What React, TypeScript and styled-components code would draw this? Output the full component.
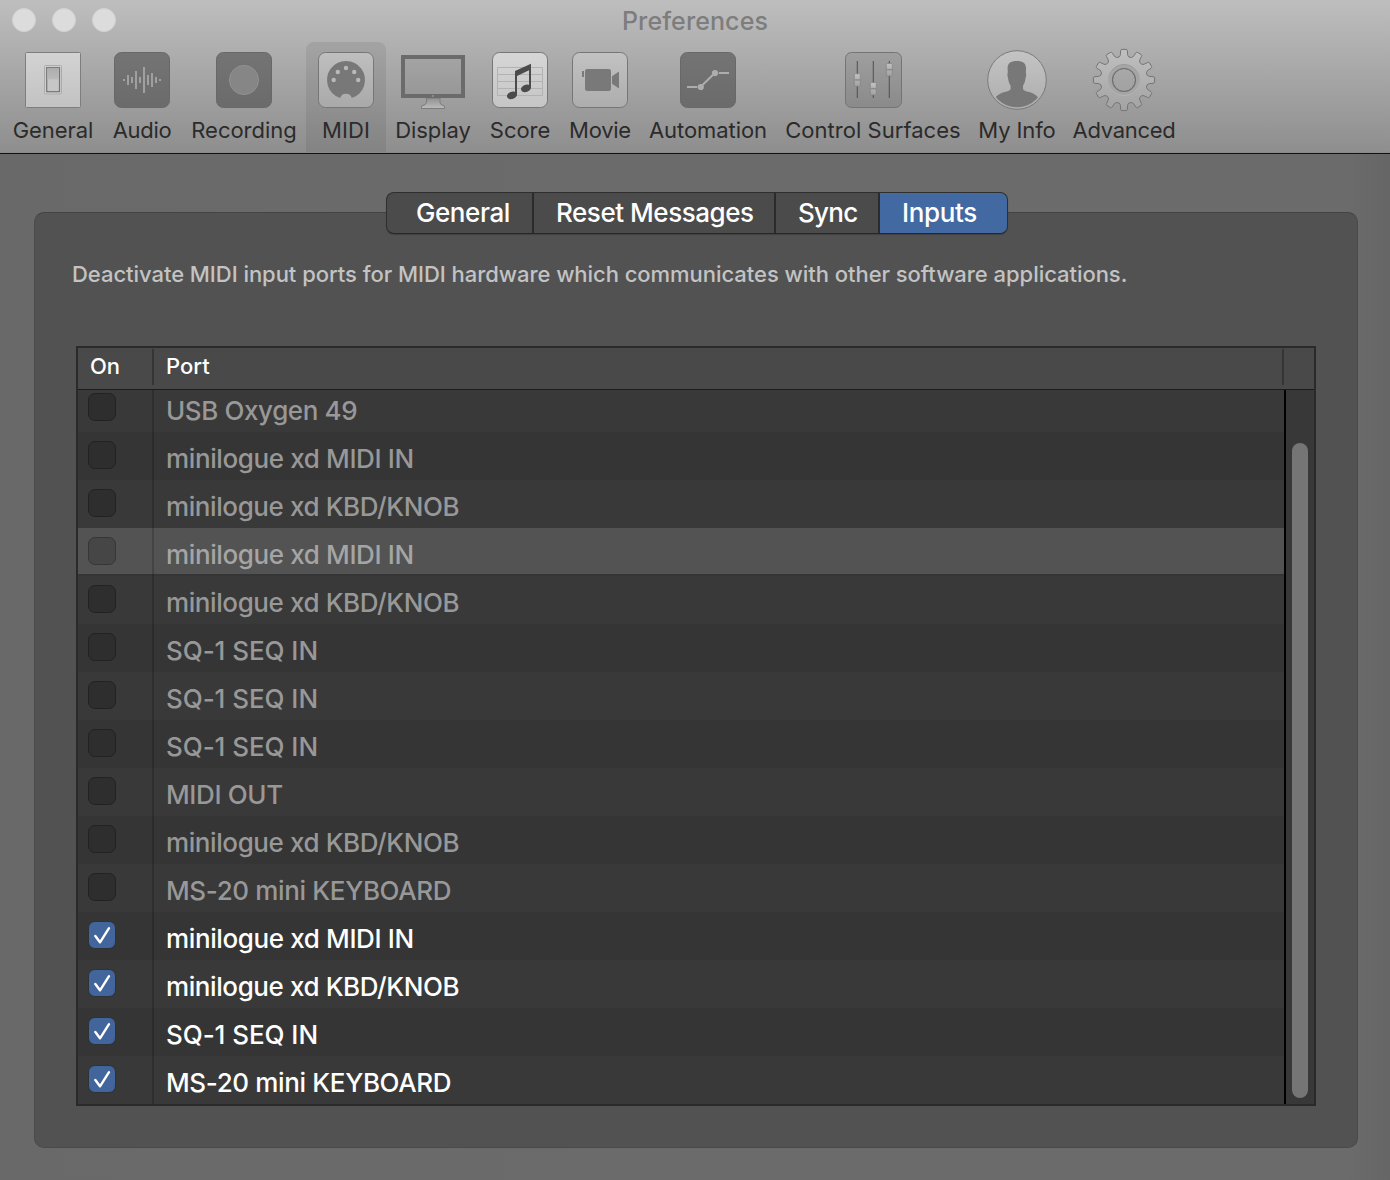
import React from "react";
import styled, { createGlobalStyle } from "styled-components";

const GlobalStyle = createGlobalStyle`
  * { box-sizing: border-box; }
  body {
    margin: 0;
    font-family: Inter, "Liberation Sans", sans-serif;
    background: #6a6a6a;
  }
`;

/* ---------- window chrome ---------- */

const Window = styled.main`
  display: flex;
  flex-direction: column;
  width: 1390px;
  height: 1180px;
  overflow: hidden;
  background: linear-gradient(90deg, #696969 0, #6b6b6b 50%, #6b6b6b 97%, #666 100%);
`;

const Header = styled.header`
  flex: none;
  height: 154px;
  border-bottom: 1px solid #111;
  background: linear-gradient(#bebebe 0, #b1b1b1 42px, #8e8e8e 152px, #858585 153px);
`;

const TitleBar = styled.div`
  display: grid;
  grid-template-columns: 1fr auto 1fr;
  align-items: center;
  height: 42px;
  padding: 0 12px 2px;
`;

const Lights = styled.div`
  display: flex;
  gap: 16px;
`;

const Light = styled.span`
  width: 24px;
  height: 24px;
  border-radius: 50%;
  background: #dcdcdc;
  border: 1px solid #d2d2d2;
`;

const Title = styled.h1<{ $track: number }>`
  margin: 0;
  padding-top: 2px;
  font-size: 25px;
  font-weight: 450;
  line-height: 38px;
  letter-spacing: ${(p) => p.$track}px;
  color: #7d7d7d;
`;

const Toolbar = styled.nav`
  display: flex;
  height: 110px;
  padding-left: 4px;
`;

const ToolButton = styled.div<{ $width: number; $active?: boolean }>`
  display: flex;
  flex-direction: column;
  align-items: center;
  flex: none;
  width: ${(p) => p.$width}px;
  padding-top: 6px;
  border-radius: 8px 8px 0 0;
  background: ${(p) => (p.$active ? "rgba(0, 0, 0, 0.075)" : "none")};
`;

const IconFrame = styled.svg`
  display: block;
  flex: none;
  width: 64px;
  height: 64px;
  overflow: visible;
`;

const ToolLabel = styled.span<{ $track: number }>`
  font-size: 22px;
  font-weight: 430;
  line-height: 36px;
  letter-spacing: ${(p) => p.$track}px;
  white-space: nowrap;
  color: #2b2b2b;
`;

/* ---------- content ---------- */

const Content = styled.div`
  display: flex;
  flex-direction: column;
  flex: 1;
  padding: 38px 32px 32px 34px;
`;

const Tabs = styled.div`
  display: flex;
  align-self: flex-start;
  z-index: 1;
  height: 42px;
  margin: 0 0 -22px 352px;
  border: 1px solid #2f2f2f;
  border-bottom-color: #272727;
  border-radius: 8px;
  overflow: hidden;
  background: #4b4b4b;
  box-shadow: 0 1px 1px rgba(0, 0, 0, 0.2);
`;

const Tab = styled.div<{ $width: number; $inset: number; $track: number; $active?: boolean }>`
  width: ${(p) => p.$width}px;
  padding-left: ${(p) => p.$inset}px;
  font-size: 26px;
  font-weight: 500;
  line-height: 40px;
  letter-spacing: ${(p) => p.$track}px;
  white-space: nowrap;
  color: #fff;
  background: ${(p) => (p.$active ? "#4269a2" : "none")};
  & + & { border-left: 2px solid #2b2b2b; }
`;

const Panel = styled.section`
  flex: 1;
  padding: 43px 41px 41px;
  border: 1px solid #4a4a4a;
  border-top-color: #444;
  border-radius: 10px;
  background: #525252;
`;

const Description = styled.p`
  margin: 0 0 72px -4px;
  font-size: 22px;
  font-weight: 450;
  line-height: 36px;
  height: 18px;
  letter-spacing: -0.042px;
  white-space: nowrap;
  color: #c3c3c3;
`;

const Table = styled.div`
  display: flex;
  flex-direction: column;
  height: 760px;
  border: 2px solid #2a2a2a;
  background: #373737;
`;

const TableHead = styled.div`
  display: flex;
  flex: none;
  align-items: flex-start;
  height: 42px;
  padding-top: 1px;
  border-bottom: 1px solid #1c1c1c;
  background: #494949;
`;

const HeadCell = styled.div<{ $width: number; $track: number }>`
  width: ${(p) => p.$width}px;
  height: 36px;
  padding-left: 12px;
  border-right: 2px solid #353535;
  font-size: 22px;
  font-weight: 500;
  line-height: 34px;
  letter-spacing: ${(p) => p.$track}px;
  color: #fff;
`;

const TableBody = styled.div`
  display: flex;
  flex: 1;
  min-height: 0;
`;

const Rows = styled.div`
  display: flex;
  flex-direction: column;
  justify-content: flex-end;
  flex: 1;
  overflow: hidden;
`;

const Row = styled.div<{ $selected?: boolean; $on?: boolean }>`
  display: flex;
  flex: none;
  height: 48px;
  color: ${(p) => (p.$on ? "#fff" : p.$selected ? "#a5a5a5" : "#989898")};
  background: #393939;
  &:nth-child(even) { background: #353535; }
  &&& {
    ${(p) => (p.$selected ? "background: linear-gradient(#535353 46px, #353535 46px);" : "")}
  }
`;

const CheckCell = styled.div`
  width: 76px;
  padding: 9px 0 0 10px;
  border-right: 2px solid rgba(0, 0, 0, 0.18);
`;

const CheckBox = styled.span<{ $on?: boolean; $selected?: boolean }>`
  display: flex;
  align-items: center;
  justify-content: center;
  width: 28px;
  height: 28px;
  border-radius: 7px;
  border: 1px solid ${(p) => (p.$on ? "#2d3238" : p.$selected ? "#363636" : "#222")};
  background: ${(p) => (p.$on ? "#42669b" : p.$selected ? "#464646" : "#2e2e2e")};
`;

const PortCell = styled.div<{ $track: number }>`
  padding: 5px 0 0 12px;
  font-size: 26px;
  font-weight: 450;
  line-height: 43px;
  letter-spacing: ${(p) => p.$track}px;
  white-space: nowrap;
`;

const ScrollTrack = styled.div`
  width: 30px;
  padding: 53px 6px 6px;
  border-left: 2px solid #000;
  background: #383838;
`;

const ScrollThumb = styled.div`
  width: 16px;
  height: 655px;
  border-radius: 8px;
  background: #757575;
`;

/* ---------- icons, all drawn in a 64-unit square ---------- */

const Gradient = ({ id, from, to }: { id: string; from: string; to: string }) => (
  <linearGradient id={id} x1="0" y1="0" x2="0" y2="1">
    <stop offset="0" stopColor={from} />
    <stop offset="1" stopColor={to} />
  </linearGradient>
);

const Tile = ({ fill, stroke = "#767676", r = 7 }: { fill: string; stroke?: string; r?: number }) => (
  <rect x="4.5" y="4.5" width="55" height="55" rx={r} fill={fill} stroke={stroke} />
);

const GeneralIcon = () => (
  <>
    <defs>
      <Gradient id="plate" from="#d3d3d3" to="#c2c2c2" />
      <Gradient id="rocker" from="#adadad" to="#bababa" />
    </defs>
    <Tile fill="url(#plate)" stroke="#7e7e7e" r={1} />
    <rect x="23.5" y="17.5" width="17" height="28.5" rx="1" fill="#cfcfcf" stroke="#ababab" />
    <rect x="25.7" y="19.7" width="12.8" height="24" fill="#c6c6c6" stroke="#747474" strokeWidth="1.2" />
    <rect x="26.3" y="20.3" width="11.6" height="11" fill="url(#rocker)" />
  </>
);

const BARS = [1, 5, 3, 9, 3, 13, 5, 7, 3, 1];
const AudioIcon = () => (
  <>
    <defs><Gradient id="darkA" from="#747474" to="#6b6b6b" /></defs>
    <Tile fill="url(#darkA)" stroke="#686868" />
    {BARS.map((h, i) => (
      <rect key={i} x={13 + i * 4} y={32 - h} width="2" height={h * 2} fill="#a0a0a0" />
    ))}
  </>
);

const RecordingIcon = () => (
  <>
    <Tile fill="url(#darkA)" stroke="#686868" />
    <circle cx="32" cy="32" r="14.6" fill="#868686" stroke="#959595" strokeWidth="0.8" />
  </>
);

const DOTS = [[19.7, 32], [23.8, 24], [32, 20], [40.2, 24], [44.2, 32]];
const MidiIcon = () => (
  <>
    <defs><Gradient id="lightM" from="#bfbfbf" to="#a9a9a9" /></defs>
    <Tile fill="url(#lightM)" />
    <path d="M26.2 50.1 A19 19 0 1 1 37.8 50.1 A6 6 0 0 0 26.2 50.1Z" fill="#787878" />
    {DOTS.map(([x, y]) => <circle key={x} cx={x} cy={y} r="2.2" fill="#b9b9b9" />)}
  </>
);

const DisplayIcon = () => (
  <>
    <defs>
      <Gradient id="screen" from="#a4a4a4" to="#979797" />
      <Gradient id="stand" from="#909090" to="#bcbcbc" />
    </defs>
    <path d="M25.5 50 H39 V54.5 Q39 56.5 43.5 58.2 V60.5 H20.5 V58.2 Q25.5 56.5 25.5 54.5Z" fill="url(#stand)" stroke="#7c7c7c" />
    <rect x="2" y="9" width="60" height="39" fill="url(#screen)" stroke="#6b6b6b" strokeWidth="4" />
    <circle cx="32" cy="48" r="0.9" fill="#999" />
  </>
);

const ScoreIcon = () => (
  <>
    <defs><Gradient id="lightS" from="#d6d6d6" to="#c5c5c5" /></defs>
    <Tile fill="url(#lightS)" />
    <path d="M9.5 19.5 H54.5 M9.5 26.5 H54.5 M9.5 33.5 H54.5 M9.5 40.5 H54.5 M9.5 47.5 H54.5 M9.5 19.5 V47.5 M54.5 19.5 V47.5" fill="none" stroke="#b2b2b2" />
    <g fill="#4b4b4b">
      <path d="M27 23 L43 15.8 V39.5 H41 V22.3 L29 28 V46.5 H27Z" />
      <ellipse cx="38" cy="40.3" rx="5.2" ry="3.6" transform="rotate(-20 38 40.3)" />
      <ellipse cx="24" cy="47.3" rx="5.2" ry="3.6" transform="rotate(-20 24 47.3)" />
    </g>
  </>
);

const MovieIcon = () => (
  <>
    <defs><Gradient id="lightV" from="#c2c2c2" to="#adadad" /></defs>
    <Tile fill="url(#lightV)" />
    <g fill="#797979">
      <rect x="17" y="21" width="26" height="22" rx="2.2" />
      <path d="M44 28.3 L51 23.6 V40.4 L44 35.7Z" />
      <path d="M14 23 H16 V29 H14Z" />
    </g>
  </>
);

const AutomationIcon = () => (
  <>
    <Tile fill="url(#darkA)" stroke="#686868" />
    <g stroke="#adadad" strokeWidth="2">
      <path d="M11 39 H21.3 M26.5 37 L37 26.7 M42.8 25 H53" />
    </g>
    <circle cx="24.8" cy="39" r="3.1" fill="#adadad" />
    <circle cx="39" cy="25" r="3.1" fill="#adadad" />
  </>
);

const FADERS = [[16.3, 25.8], [32.3, 34.5], [48.3, 15.5]];
const ControlIcon = () => (
  <>
    <defs>
      <Gradient id="desk" from="#9f9f9f" to="#8a8a8a" />
      <Gradient id="knob" from="#c2c2c2" to="#a2a2a2" />
    </defs>
    <rect x="4.5" y="4.5" width="56" height="55" rx="6" fill="url(#desk)" stroke="#747474" />
    {FADERS.map(([x, y]) => (
      <g key={x}>
        <path d={`M${x} 13 V50`} stroke="#555" strokeWidth="1.1" />
        <rect x={x - 3} y={y} width="6" height="12.4" rx="0.8" fill="url(#knob)" stroke="#838383" strokeWidth="0.7" />
        <rect x={x - 2.7} y={y + 5.4} width="5.4" height="1.5" fill="#8b8b8b" />
      </g>
    ))}
  </>
);

const PersonIcon = () => (
  <>
    <defs>
      <Gradient id="lightP" from="#c4c4c4" to="#adadad" />
      <clipPath id="bust"><circle cx="32" cy="32" r="27.3" /></clipPath>
    </defs>
    <circle cx="32" cy="32" r="29.3" fill="url(#lightP)" stroke="#7a7a7a" />
    <path
      clipPath="url(#bust)"
      fill="#787878"
      d="M31.8 13 C38 13 41 15.6 41 20 L40.8 24.5 Q41.7 26.5 40.6 30 C40.2 33 39.4 35.5 38 37.8 V40.6 C38 42.4 40 43.2 43 43.8 C47 44.6 50.5 46.5 53.5 49.8 V62 H10 V49.8 C13 46.5 17 44.6 20.8 43.8 C23.6 43.2 25.6 42.4 25.6 40.6 V37.8 C24.2 35.5 23.4 33 23 30 Q21.9 26.5 22.8 24.5 L22.6 20 C22.6 15.6 25.6 13 31.8 13Z"
    />
  </>
);

const gearPath = () => {
  const teeth = 12;
  const polar = (r: number, a: number) => `${(32 + r * Math.sin(a)).toFixed(2)} ${(32 - r * Math.cos(a)).toFixed(2)}`;
  let d = "";
  for (let i = 0; i < teeth; i++) {
    const a = (i * 2 * Math.PI) / teeth;
    d += `${i ? "L" : "M"}${polar(23.6, a - 0.21)} Q${polar(24.4, a - 0.15)} ${polar(26, a - 0.138)}`;
    d += ` L${polar(29.4, a - 0.115)} Q${polar(30.7, a - 0.105)} ${polar(30.7, a - 0.07)}`;
    d += ` L${polar(30.7, a + 0.07)} Q${polar(30.7, a + 0.105)} ${polar(29.4, a + 0.115)}`;
    d += ` L${polar(26, a + 0.138)} Q${polar(24.4, a + 0.15)} ${polar(23.6, a + 0.21)}`;
  }
  return `${d}Z M43.5 32 A11.5 11.5 0 1 0 20.5 32 A11.5 11.5 0 1 0 43.5 32Z`;
};

const GearIcon = () => (
  <>
    <defs>
      <Gradient id="gear" from="#c0c0c0" to="#a3a3a3" />
      <Gradient id="ring" from="#979797" to="#b6b6b6" />
    </defs>
    <path d={gearPath()} fillRule="evenodd" fill="url(#gear)" stroke="#747474" strokeWidth="1" />
    <circle cx="32" cy="32" r="13.8" fill="none" stroke="#a5a5a5" strokeWidth="3.4" />
    <circle cx="32" cy="32" r="15.6" fill="none" stroke="url(#ring)" strokeWidth="0.9" />
    <circle cx="32" cy="32" r="11.5" fill="none" stroke="#707070" strokeWidth="1.1" />
  </>
);

const TOOLS = [
  { label: "General", width: 98, track: -0.05, Icon: GeneralIcon },
  { label: "Audio", width: 80, track: -0.3, Icon: AudioIcon },
  { label: "Recording", width: 124, track: -0.02, Icon: RecordingIcon },
  { label: "MIDI", width: 80, track: 0.05, Icon: MidiIcon, active: true },
  { label: "Display", width: 94, track: -0.05, Icon: DisplayIcon },
  { label: "Score", width: 80, track: -0.05, Icon: ScoreIcon },
  { label: "Movie", width: 80, track: -0.25, Icon: MovieIcon },
  { label: "Automation", width: 136, track: -0.07, Icon: AutomationIcon },
  { label: "Control Surfaces", width: 194, track: 0.03, Icon: ControlIcon },
  { label: "My Info", width: 94, track: -0.1, Icon: PersonIcon },
  { label: "Advanced", width: 120, track: -0.3, Icon: GearIcon },
];

const TABS = [
  { label: "General", width: 145, inset: 29, track: -0.42 },
  { label: "Reset Messages", width: 242, inset: 22, track: -0.46 },
  { label: "Sync", width: 104, inset: 22, track: -0.75 },
  { label: "Inputs", width: 129, inset: 22, track: -0.35, active: true },
];

const PORTS: { name: string; track: number; on?: boolean; selected?: boolean }[] = [
  { name: "USB Oxygen 49", track: -0.4 },
  { name: "minilogue xd MIDI IN", track: -0.38 },
  { name: "minilogue xd KBD/KNOB", track: -0.41 },
  { name: "minilogue xd MIDI IN", track: -0.38, selected: true },
  { name: "minilogue xd KBD/KNOB", track: -0.41 },
  { name: "SQ-1 SEQ IN", track: -0.06 },
  { name: "SQ-1 SEQ IN", track: -0.06 },
  { name: "SQ-1 SEQ IN", track: -0.06 },
  { name: "MIDI OUT", track: -0.36 },
  { name: "minilogue xd KBD/KNOB", track: -0.41 },
  { name: "MS-20 mini KEYBOARD", track: -0.36 },
  { name: "minilogue xd MIDI IN", track: -0.38, on: true },
  { name: "minilogue xd KBD/KNOB", track: -0.41, on: true },
  { name: "SQ-1 SEQ IN", track: -0.06, on: true },
  { name: "MS-20 mini KEYBOARD", track: -0.36, on: true },
];

const CheckMark = () => (
  <svg width="26" height="26" viewBox="0 0 26 26" fill="none">
    <path d="M6.3 14 L11 20.3 L20 6.2" stroke="#fff" strokeWidth="2.4" strokeLinecap="round" strokeLinejoin="round" />
  </svg>
);

export default function App() {
  return (
    <Window>
      <GlobalStyle />
      <Header>
        <TitleBar>
          <Lights><Light /><Light /><Light /></Lights>
          <Title $track={0.1}>Preferences</Title>
        </TitleBar>
        <Toolbar>
          {TOOLS.map(({ label, width, track, active, Icon }) => (
            <ToolButton key={label} $width={width} $active={active}>
              <IconFrame viewBox="0 0 64 64"><Icon /></IconFrame>
              <ToolLabel $track={track}>{label}</ToolLabel>
            </ToolButton>
          ))}
        </Toolbar>
      </Header>
      <Content>
        <Tabs>
          {TABS.map((t) => (
            <Tab key={t.label} $width={t.width} $inset={t.inset} $track={t.track} $active={t.active}>{t.label}</Tab>
          ))}
        </Tabs>
        <Panel>
          <Description>
            Deactivate MIDI input ports for MIDI hardware which communicates with other software applications.
          </Description>
          <Table>
            <TableHead>
              <HeadCell $width={76} $track={0}>On</HeadCell>
              <HeadCell $width={1130} $track={0}>Port</HeadCell>
            </TableHead>
            <TableBody>
              <Rows>
                {PORTS.map((p, i) => (
                  <Row key={i} $on={p.on} $selected={p.selected}>
                    <CheckCell>
                      <CheckBox $on={p.on} $selected={p.selected}>{p.on && <CheckMark />}</CheckBox>
                    </CheckCell>
                    <PortCell $track={p.track}>{p.name}</PortCell>
                  </Row>
                ))}
              </Rows>
              <ScrollTrack><ScrollThumb /></ScrollTrack>
            </TableBody>
          </Table>
        </Panel>
      </Content>
    </Window>
  );
}
